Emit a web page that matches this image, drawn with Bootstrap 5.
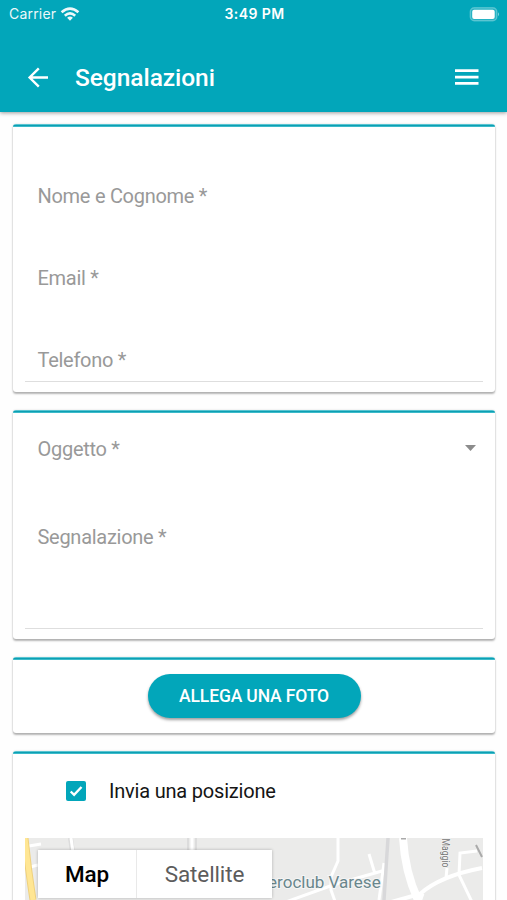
<!DOCTYPE html>
<html lang="it">
<head>
<meta charset="utf-8">
<meta name="viewport" content="width=device-width, initial-scale=1">
<title>Segnalazioni</title>
<link href="https://cdn.jsdelivr.net/npm/bootstrap@5.3.0/dist/css/bootstrap.min.css" rel="stylesheet">
<style>
:root { --teal: #02a6ba; }
body { font-family: Roboto, sans-serif; background: #fefefe; height: 900px; overflow: hidden; }
.app-head { background: var(--teal); height: 112px; color: #fff; box-shadow: 0 1px 4px rgba(0,0,0,.4); }
.status { height: 28px; padding: 0 7px 0 9px; font: 500 14px/28px Inter, sans-serif; }
.status > * { flex: 1 1 0; }
.carrier { font-weight: 400; letter-spacing: .2px; opacity: .93; }
.clock { font-weight: 600; font-size: 14px; letter-spacing: .4px; }
.bar { height: 84px; padding: 16px 28px 0 27px; }
.title { font-size: 24.5px; font-weight: 500; line-height: 36px; margin-left: 26px; letter-spacing: -.05px; }
.panels { padding: 12px 12px 0 13px; }
.panel { background: #fff; border-radius: 3px; box-shadow: 0 2px 2px rgba(0,0,0,.28), 0 0 2px rgba(0,0,0,.16); margin-bottom: 18px; padding: 0 12px; }
.panel::before { content: ""; display: block; height: 3px; margin: 0 -12px; border-radius: 3px 3px 0 0; background: linear-gradient(#58c4d1 0 1px, #0c9fb3 1px 2px, #3bbac9 2px 3px); }
.field { color: #999; font-size: 20px; line-height: 24px; padding-left: 12.5px; letter-spacing: -.28px; }
.p1 { height: 267.5px; }
.p1 .field { height: 82px; }
.p1 .field:first-child { margin-top: 57px; }
.p1 .field:last-child { height: 34px; }
.p2 { height: 229px; }
.lined { border-bottom: 1px solid #dedede; }
.subject { height: 88px; padding-top: 24px; padding-right: 7px; }
.message { height: 128px; padding-top: 24px; }
.p3 { height: 76px; }
.photo { width: 213px; height: 44px; margin-top: 14px; background: var(--teal); color: #fff; font-size: 17.5px; font-weight: 500; line-height: 42px; letter-spacing: -.15px; padding: 0; border: 0; box-shadow: 0 2px 3px rgba(0,0,0,.38); }
.p4 { height: 170px; }
.position { height: 84px; padding: 0 0 9px 40.5px; font-size: 20px; letter-spacing: -.2px; color: #151515; gap: 23.5px; }
.map { height: 80px; overflow: hidden; }
.map-type { left: 13px; top: 12px; width: 234px; height: 48px; background: #fff; box-shadow: 0 0 3px rgba(0,0,0,.25); font-size: 22.5px; letter-spacing: -.1px; color: #5c5c5c; line-height: 48px; }
.map-type .on { width: 99px; border-right: 1px solid #e9e9e9; color: #000; font-weight: 500; }
</style>
</head>
<body>
<header class="app-head position-relative">
  <div class="status d-flex align-items-center">
    <div class="carrier d-flex align-items-center">Carrier
      <svg class="ms-1" width="20" height="15" viewBox="0 0 20 15" fill="none" stroke="#fff" stroke-width="2.7"><path d="M1.6 5.2Q10-2 18.4 5.2M4.8 8.7Q10 4.2 15.2 8.7"/><path d="M7.1 10.7Q10 8.4 12.9 10.7L10 13.8Z" fill="#fff" stroke="none"/></svg>
    </div>
    <div class="clock text-center">3:49 PM</div>
    <div class="d-flex justify-content-end">
      <svg width="31" height="15" viewBox="0 0 31 15"><rect x="1.3" y=".8" width="26.5" height="13" rx="4" fill="#fff" fill-opacity=".15" stroke="#fff" stroke-opacity=".28" stroke-width="1.4"/><rect x="3.2" y="2.7" width="22.5" height="9.2" rx="2" fill="#fff"/><path d="M29 5.2q2 2 0 4z" fill="#fff" fill-opacity=".5"/></svg>
    </div>
  </div>
  <div class="bar d-flex align-items-center">
    <svg width="22" height="22" viewBox="0 0 22 22" fill="none" stroke="#fff" stroke-width="2.4"><path d="M21 10.5H2.8M11.8 1.3L2.6 10.5l9.2 9.2"/></svg>
    <div class="title">Segnalazioni</div>
    <svg class="ms-auto" width="24" height="18" viewBox="0 0 24 18" fill="#fff"><path d="M0 .3h23.5v2.7H0zM0 6.7h23.5v2.7H0zM0 13.1h23.5v2.7H0z"/></svg>
  </div>
</header>
<main class="panels">
  <section class="panel p1">
    <div class="field">Nome e Cognome *</div>
    <div class="field">Email *</div>
    <div class="field lined">Telefono *</div>
  </section>
  <section class="panel p2">
    <div class="field subject d-flex justify-content-between">Oggetto *
      <svg class="mt-2" width="11" height="6" viewBox="0 0 11 6"><path d="M0 0h11L5.5 6z" fill="#8c8c8c"/></svg>
    </div>
    <div class="field message lined">Segnalazione *</div>
  </section>
  <section class="panel p3 text-center">
    <button class="btn photo rounded-pill" type="button">ALLEGA UNA FOTO</button>
  </section>
  <section class="panel p4">
    <div class="position d-flex align-items-center">
      <svg width="20" height="20" viewBox="0 0 20 20"><rect width="20" height="20" rx="2" fill="#02a6ba"/><path d="M4.7 10.5l3.4 3.3 7.4-7.8" fill="none" stroke="#fff" stroke-width="2.4"/></svg>
      <span>Invia una posizione</span>
    </div>
    <div class="map position-relative">
      <svg class="d-block" width="458" height="80" viewBox="25 838 458 80">
        <path d="M25 838h458v80H25z" fill="#ebebea"/>
        <g fill="none" stroke="#fff" stroke-width="3">
          <path d="M29 846l12-2M30 867l8-2" />
          <path d="M69 838l2 14M72 838l2 14M188 838v14M196 838v14" stroke-width="2" stroke="#dcdcdc"/>
          <path d="M71 838l2 14M192 838v14"/>
          <path d="M338 838v23l-7 16v13l6 17M369 854l6 20M283 903l50-18 49-14M384 863l-5 37"/>
          <path d="M388 838l-4 62" stroke="#d8d8da" stroke-width="3.5"/>
          <path d="M403 838q2 34 15 62" stroke-width="8"/>
          <path d="M384 904l36-10q20-18 62-26" stroke-width="4"/>
          <path d="M447 868l-1 10M477 851l-17 2-1 22 13 27"/>
          <path d="M421 893l-7 20" stroke-width="7"/>
        </g>
        <path d="M25 838q3 30 8 62" fill="none" stroke="#efd17d" stroke-width="7"/>
        <path d="M25 838q3 30 8 62" fill="none" stroke="#ffe693" stroke-width="5"/>
        <path d="M401 838.5h5M476 845l6 12" stroke="#aaa" stroke-width="2"/>
        <text x="257" y="888" font-size="17" fill="#69868c" stroke="#f5f5f5" stroke-width="2" paint-order="stroke">Aeroclub Varese</text>
        <text transform="translate(442 838.5) rotate(90)" font-size="11" textLength="29" lengthAdjust="spacingAndGlyphs" fill="#777" stroke="#f5f5f5" stroke-width="1.5" paint-order="stroke">Maggio</text>
      </svg>
      <div class="map-type position-absolute d-flex text-center">
        <div class="on">Map</div><div class="flex-fill">Satellite</div>
      </div>
    </div>
  </section>
</main>
<script src="https://cdn.jsdelivr.net/npm/bootstrap@5.3.0/dist/js/bootstrap.bundle.min.js"></script>
</body>
</html>
